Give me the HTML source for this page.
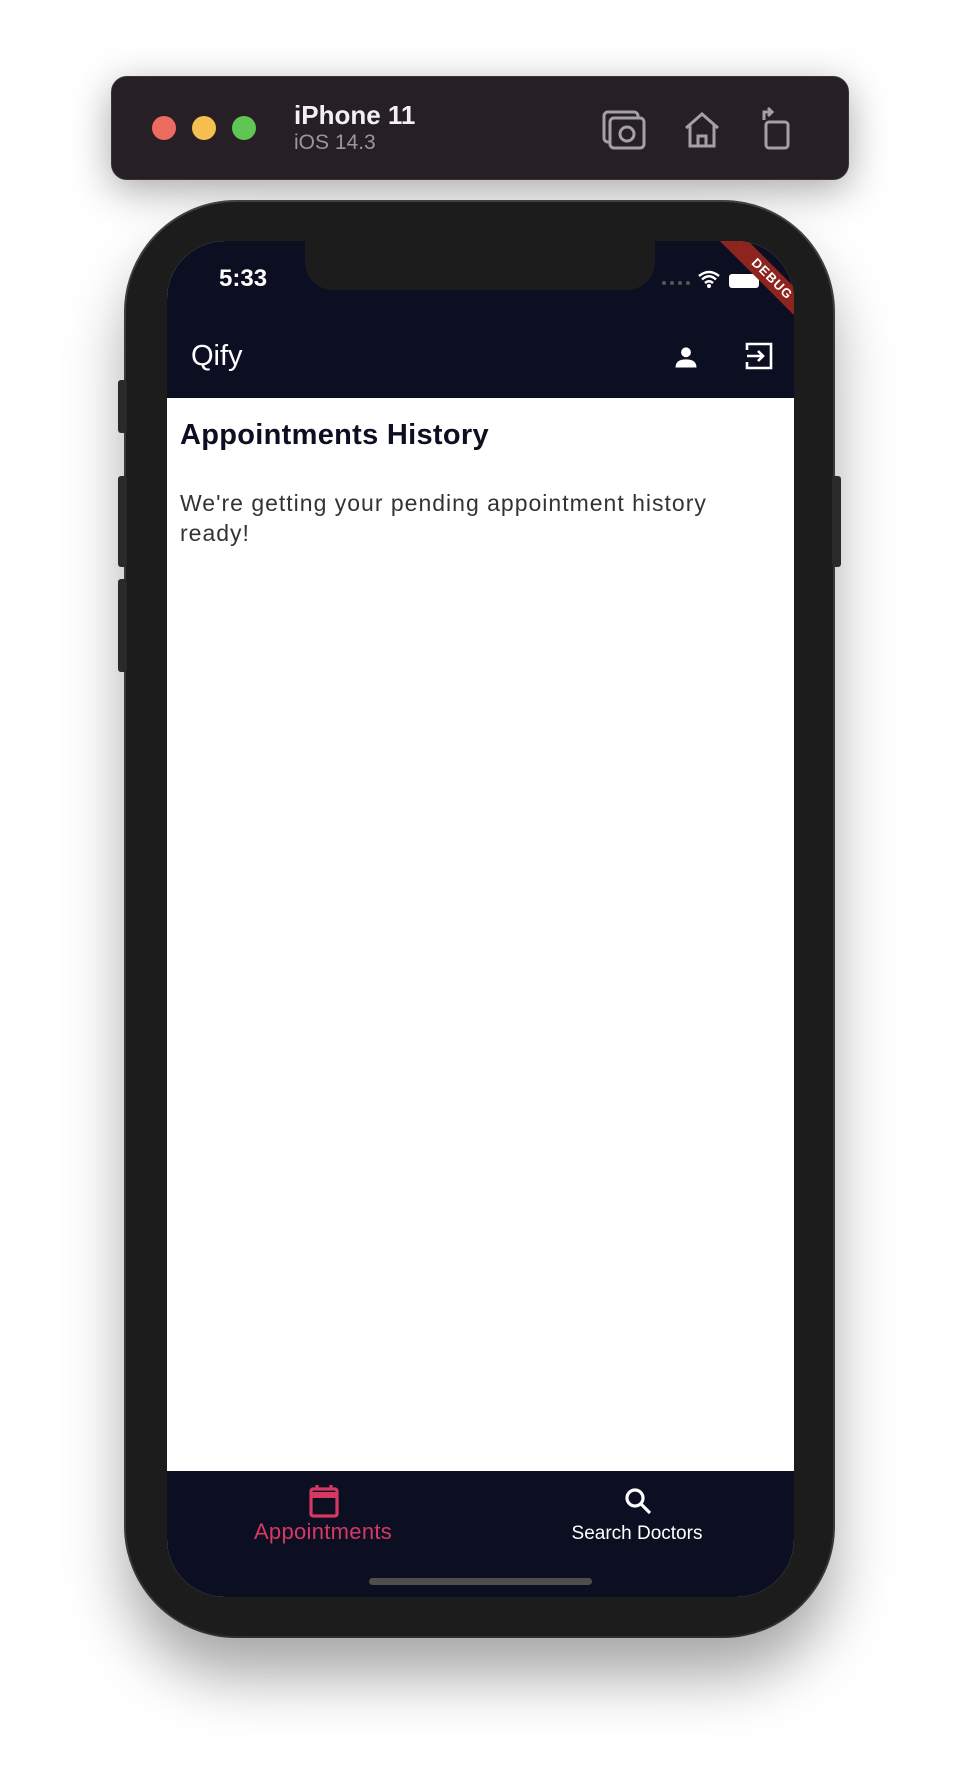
<!DOCTYPE html>
<html><head><meta charset="utf-8"><style>
*{margin:0;padding:0;box-sizing:border-box}
body{width:960px;height:1786px;background:#fff;position:relative;overflow:hidden;font-family:"Liberation Sans",sans-serif}
.abs{position:absolute}
</style></head><body>
<div class="abs" style="left:111px;top:76px;width:738px;height:104px;background:#262026;border-radius:16px;box-shadow:0 10px 40px rgba(0,0,0,.35);border:1px solid #3a343a"></div>
<div class="abs" style="left:152px;top:116px;width:24px;height:24px;border-radius:50%;background:#ed6a5e"></div>
<div class="abs" style="left:192px;top:116px;width:24px;height:24px;border-radius:50%;background:#f4bf4f"></div>
<div class="abs" style="left:232px;top:116px;width:24px;height:24px;border-radius:50%;background:#61c554"></div>
<div class="abs" style="left:294px;top:100px;color:#f2f0f2;font-weight:bold;font-size:26px">iPhone 11</div>
<div class="abs" style="left:294px;top:131px;color:#9a979c;font-size:21px">iOS 14.3</div>
<svg class="abs" style="left:600px;top:106px" width="210" height="46" viewBox="0 0 210 46" fill="none" stroke="#a4a1a5" stroke-width="3">
<rect x="4" y="6" width="34" height="30" rx="4"/><rect x="10" y="12" width="34" height="30" rx="4" fill="#262026"/><circle cx="27" cy="28" r="7"/>
<path d="M86 22 L102 8 L118 22 M90 19 V40 H114 V19 M98 40 V30 H106 V40"/>
<rect x="166" y="16" width="22" height="26" rx="3"/><path d="M164 14 V6 H172 M168 2 L172 6 L168 10"/>
</svg>
<div class="abs" style="left:126px;top:202px;width:707px;height:1434px;background:#1c1c1c;border-radius:110px;box-shadow:0 40px 60px rgba(0,0,0,.35),0 0 0 2px #444"></div>
<div class="abs" style="left:118px;top:380px;width:9px;height:53px;background:#2a2a2a;border-radius:3px"></div>
<div class="abs" style="left:118px;top:476px;width:9px;height:91px;background:#2a2a2a;border-radius:3px"></div>
<div class="abs" style="left:118px;top:579px;width:9px;height:93px;background:#2a2a2a;border-radius:3px"></div>
<div class="abs" style="left:832px;top:476px;width:9px;height:91px;background:#2a2a2a;border-radius:3px"></div>
<div class="abs" style="left:167px;top:241px;width:627px;height:1356px;border-radius:58px;overflow:hidden;background:#fff">
  <div class="abs" style="left:0;top:0;width:627px;height:157px;background:#0c0f21"></div>
  <div class="abs" style="left:138px;top:-10px;width:350px;height:59px;background:#1c1c1c;border-radius:0 0 28px 28px"></div>
  <div class="abs" style="left:52px;top:24px;color:#fff;font-size:24px;font-weight:600">5:33</div>
  <div class="abs" style="left:495px;top:40px;width:28px;height:4px;border-top:4px dotted #555"></div>
  <svg class="abs" style="left:530px;top:29px" width="24" height="18" viewBox="0 0 24 18"><path d="M2 6 Q12 -2 22 6 M5 9.5 Q12 3 19 9.5 M8 13 Q12 9.5 16 13" stroke="#fff" stroke-width="2.5" fill="none"/><circle cx="12" cy="16" r="2" fill="#fff"/></svg>
  <div class="abs" style="left:562px;top:33px;width:30px;height:14px;background:#fff;border-radius:3px"></div>
  <div class="abs" style="left:530px;top:28px;width:150px;height:20px;background:#8e2420;transform:rotate(45deg);color:#fff;font-weight:bold;font-size:13px;text-align:center;line-height:20px;letter-spacing:1px">DEBUG</div>
  <div class="abs" style="left:24px;top:99px;color:#fff;font-size:29px">Qify</div>
  <svg class="abs" style="left:505px;top:102px" width="28" height="28" viewBox="0 0 24 24" fill="#fff"><circle cx="12" cy="8" r="4.2"/><path d="M3 21 Q3 14 12 14 Q21 14 21 21Z"/></svg>
  <svg class="abs" style="left:577px;top:100px" width="30" height="30" viewBox="0 0 30 30" fill="none" stroke="#fff" stroke-width="2.6"><path d="M3 9 V3 H27 V27 H3 V21"/><path d="M3 15 H19 M14 10 L19 15 L14 20"/></svg>
  <div class="abs" style="left:13px;top:178px;color:#0c0f21;font-weight:bold;font-size:29px;letter-spacing:0.3px">Appointments History</div>
  <div class="abs" style="left:13px;top:247px;width:570px;color:#333;font-size:23px;letter-spacing:1px;line-height:30px">We're getting your pending appointment history ready!</div>
  <div class="abs" style="left:0;top:1230px;width:627px;height:126px;background:#0c0f21"></div>
  <svg class="abs" style="left:141px;top:1243px" width="32" height="34" viewBox="0 0 32 34" fill="none" stroke="#d63864" stroke-width="3.2"><rect x="3" y="5" width="26" height="27" rx="2"/><path d="M3 11 H29" stroke-width="6"/><path d="M9 1 V6 M23 1 V6"/></svg>
  <div class="abs" style="left:56px;top:1278px;width:200px;text-align:center;color:#d63864;font-size:22px;letter-spacing:0.3px">Appointments</div>
  <svg class="abs" style="left:456px;top:1245px" width="30" height="30" viewBox="0 0 30 30" fill="none" stroke="#fff" stroke-width="3.2"><circle cx="12" cy="12" r="8"/><path d="M18 18 L27 27"/></svg>
  <div class="abs" style="left:370px;top:1282px;width:200px;text-align:center;color:#fff;font-size:19px">Search Doctors</div>
  <div class="abs" style="left:202px;top:1337px;width:223px;height:7px;background:#4e4e4e;border-radius:4px"></div>
</div>
</body></html>
